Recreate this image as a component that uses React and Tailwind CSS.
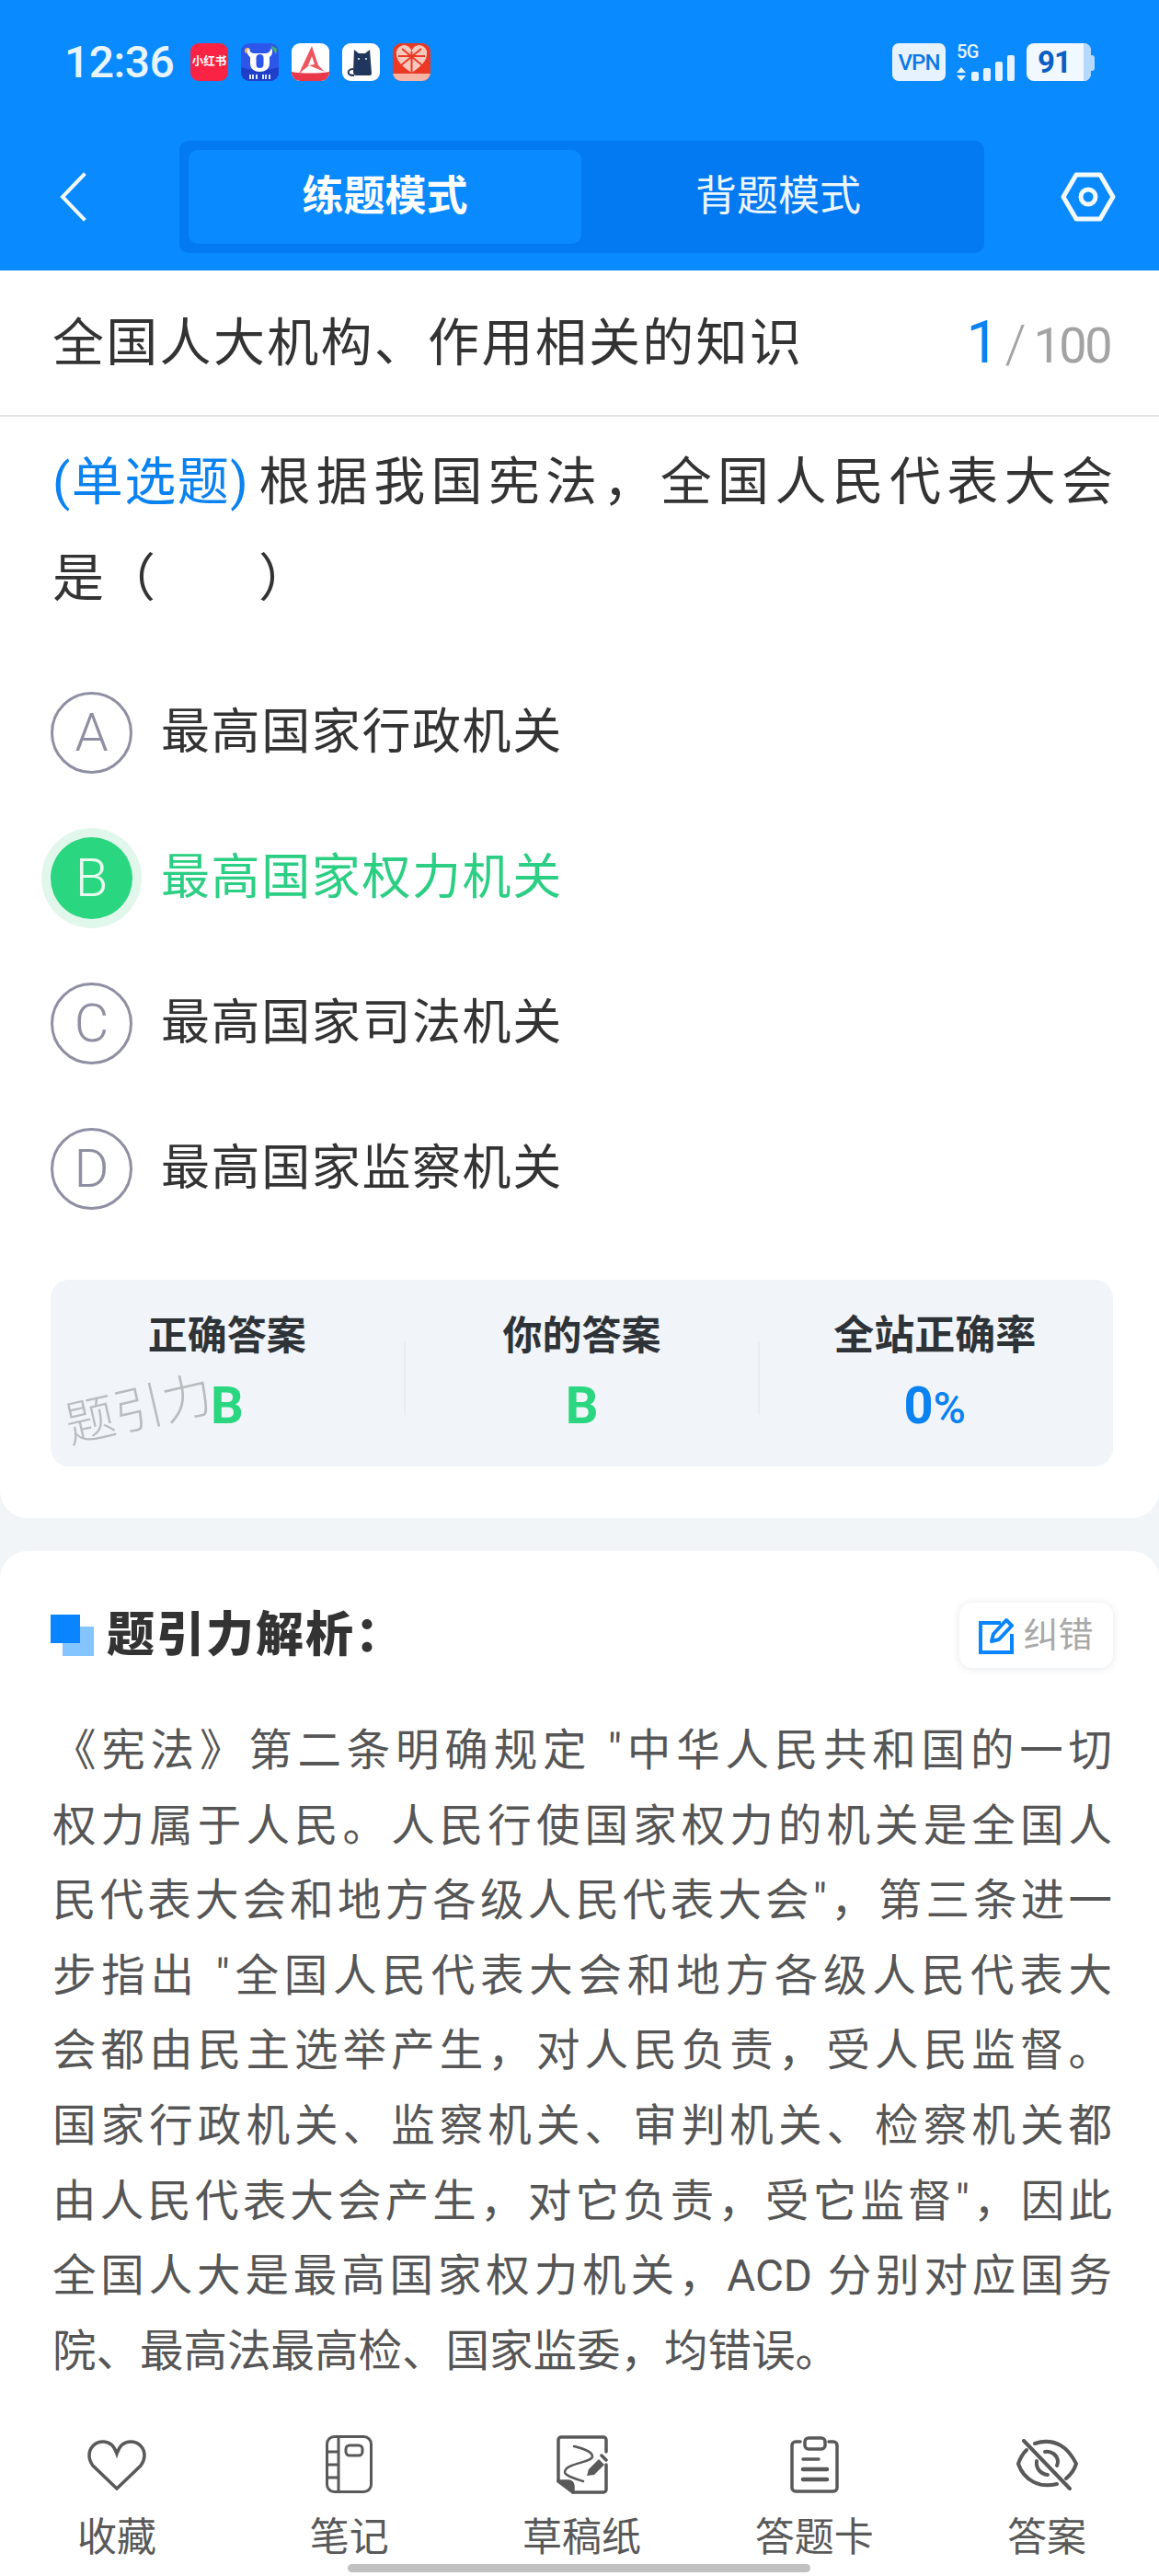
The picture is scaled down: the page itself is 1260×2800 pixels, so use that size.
const CJK = "font-['Roboto','Noto_Sans_CJK_SC',sans-serif]";

const options = [
  { key: "A", text: "最高国家行政机关" },
  { key: "B", text: "最高国家权力机关", correct: true },
  { key: "C", text: "最高国家司法机关" },
  { key: "D", text: "最高国家监察机关" },
];

const explanation = [
  "《宪法》第二条明确规定 \"中华人民共和国的一切",
  "权力属于人民。人民行使国家权力的机关是全国人",
  "民代表大会和地方各级人民代表大会\"，第三条进一",
  "步指出 \"全国人民代表大会和地方各级人民代表大",
  "会都由民主选举产生，对人民负责，受人民监督。",
  "国家行政机关、监察机关、审判机关、检察机关都",
  "由人民代表大会产生，对它负责，受它监督\"，因此",
  "全国人大是最高国家权力机关，ACD 分别对应国务",
];

function AppIcons() {
  return (
    <div className="flex gap-[14px] ml-[20px] mt-[-2px]">
      <div className={`w-[41px] h-[41px] rounded-[9px] bg-[#fb2343] flex items-center justify-center text-white text-[12.500px] font-bold leading-none whitespace-nowrap ${CJK}`}>小红书</div>
      <div className="w-[41px] h-[41px] rounded-[9px] bg-[#2f56ea] overflow-hidden">
        <svg width="41" height="41" viewBox="0 0 41 41">
          <circle cx="7" cy="8" r="3" fill="#e8b96a" />
          <path d="M32 2l7 4-1 6z" fill="#3fb56b" />
          <path d="M0 26c10 4 30 4 41 0v15H0z" fill="#1f3fc9" />
          <path d="M8 5c1 4 3 5 5 6h15c2-1 4-2 5-6 2 4 1 8-2 10v7c0 6-5 9-10.500 9S10 28 10 22v-7C7 13 6 9 8 5z" fill="#fff" />
          <rect x="16.500" y="12" width="8" height="15" rx="4" fill="#2f56ea" />
          <path d="M10 34v5M13 34v5M24 34v5M27 34v5M17 34v5M31 34v5" stroke="#d8e4ff" strokeWidth="2" />
        </svg>
      </div>
      <div className="w-[41px] h-[41px] rounded-[9px] bg-white overflow-hidden">
        <svg width="41" height="41" viewBox="0 0 41 41">
          <path d="M22 3l7 21 7 7-10-4-7-3-11 9C12 24 17 14 22 3z" fill="#f0545f" />
          <path d="M22 14l3 9-7 1z" fill="#fff" />
          <path d="M0 31c10 2 30 2 41 0v10H0z" fill="#e8384a" />
        </svg>
      </div>
      <div className="w-[41px] h-[41px] rounded-[9px] bg-white">
        <svg width="41" height="41" viewBox="0 0 41 41">
          <path d="M13 7l5 4h7l5-4 2 26c0 1-1 2-2 2H15c-2 0-3-2-3-4z" fill="#20365c" />
          <path d="M12 28c-4 0-6 2-5 5 1 2 3 2 6 2" stroke="#20365c" strokeWidth="2" fill="none" />
          <circle cx="18" cy="17" r="1" fill="#fff" />
          <circle cx="26" cy="17" r="1" fill="#fff" />
        </svg>
      </div>
      <div className="w-[41px] h-[41px] rounded-[9px] bg-[#ea3a26] overflow-hidden">
        <svg width="41" height="41" viewBox="0 0 41 41">
          <path d="M20.500 32C10 25 4 19 4 12a8 8 0 0 1 16.500-3A8 8 0 0 1 37 12c0 7-6 13-16.500 20z" fill="#f9c9bd" />
          <path d="M20.500 9v23M6 14h29M10 6l22 18M31 6L9 24" stroke="#ea3a26" strokeWidth="2" />
          <path d="M0 33h41v8H0z" fill="#f7b3a3" />
        </svg>
      </div>
    </div>
  );
}

function StatusRight() {
  return (
    <div className="flex items-start">
      <div className="w-[58px] h-[41px] rounded-[7px] bg-[#e6f3ff] text-[#0a78e6] text-[24px] font-['Roboto',sans-serif] font-medium flex items-center justify-center tracking-[-1px]">VPN</div>
      <div className="ml-[12px] w-[63px] h-[41px] relative">
        <span className="absolute left-0 top-[-3px] text-[#e6f3ff] text-[20px] font-medium font-['Roboto',sans-serif] leading-[24px] tracking-[-0.5px]">5G</span>
        <svg className="absolute left-0 top-0" width="63" height="41" viewBox="0 0 63 41" fill="#e6f3ff">
          <path d="M5 26l5 6H0zM5 41l5-6H0z" />
          <rect x="16" y="31" width="8" height="10" rx="2" />
          <rect x="29" y="27" width="8" height="14" rx="2" />
          <rect x="42" y="20" width="8" height="21" rx="2" />
          <rect x="55" y="13" width="8" height="28" rx="2" />
        </svg>
      </div>
      <div className="relative ml-[13px] w-[70px] h-[41px] rounded-[8px] bg-[#f2f8ff] overflow-hidden text-[#0a5fc4] text-[33px] font-bold font-['Roboto',sans-serif] flex items-center justify-center pr-[10px] tracking-[-1px]">
        91
        <div className="absolute right-0 top-0 bottom-0 w-[8px] bg-[#b5d8fd]" />
      </div>
      <div className="w-[4px] h-[17px] mt-[13px] bg-[#b5d8fd] rounded-r-[3px]" />
    </div>
  );
}

function TopBar() {
  return (
    <header className="bg-[#0a8aff] h-[294px] flex flex-col shrink-0">
      <div className="h-[153px] pt-[49px] px-[70px] flex items-start">
        <span className="text-[#e8f5ff] text-[48px] font-['Roboto',sans-serif] font-medium leading-[38px] tracking-[-0.5px] w-[117px] whitespace-nowrap">12:36</span>
        <AppIcons />
        <div className="ml-auto -mt-[2px]">
          <StatusRight />
        </div>
      </div>
      <div className="flex items-start pl-[64px] pr-[47px]">
        <div className="w-[131px] h-[122px] flex items-center">
          <svg width="30" height="54" viewBox="0 0 30 54" fill="none" stroke="#f2f9ff" strokeWidth="4" strokeLinecap="square">
            <path d="M27 3L4 27l23 24" />
          </svg>
        </div>
        <div className="w-[875px] h-[122px] rounded-[10px] bg-[#0379f2] py-[10px] px-[10px] flex">
          <div className={`w-[427px] h-[102px] rounded-[10px] bg-[#0a8aff] text-white text-[45px] font-bold flex items-center justify-center ${CJK}`}>练题模式</div>
          <div className={`flex-1 text-[#ecf6ff] text-[45px] flex items-center justify-center ${CJK}`}>背题模式</div>
        </div>
        <div className="flex-1 h-[122px] flex items-center justify-end">
          <svg width="60" height="54" viewBox="0 0 60 54" fill="none" stroke="#f2f9ff" strokeWidth="5" strokeLinejoin="round">
            <path d="M17 3h26l14 24-14 24H17L3 27z" />
            <circle cx="30" cy="27" r="8" />
          </svg>
        </div>
      </div>
    </header>
  );
}

function QuestionCard() {
  return (
    <section className="bg-white rounded-b-[30px] h-[1356px] shrink-0">
      <div className="h-[159px] pl-[57px] pr-[53px] flex items-center justify-between border-b-2 border-[#e2e4e6]">
        <span className={`text-[56px] tracking-[2.300px] text-[#333] ${CJK}`}>全国人大机构、作用相关的知识</span>
        <span className="text-[#a3a3a3] font-['Roboto',sans-serif] flex items-baseline">
          <span className="text-[#0a82f0] text-[64px] mr-[6px]">1</span>
          <span className="text-[58px] font-light mr-[8px]">/</span>
          <span className="text-[54px] tracking-[-2.500px]">100</span>
        </span>
      </div>
      <div className={`pl-[57px] pr-[50px] pt-[19px] text-[56px] text-[#333] leading-[105px] ${CJK}`}>
        <div className="[text-align:justify] [text-align-last:justify]">
          <span className="inline-block text-[#0a82f0] tracking-[1.500px] mr-[4px]">(单选题)</span>根据我国宪法，全国人民代表大会
        </div>
        <div>是（　　）</div>
      </div>
      <div className="mt-[70px] pl-[55px] flex flex-col gap-[69px]">
        {options.map((o) => (
          <div key={o.key} className="flex items-center h-[89px]">
            {o.correct ? (
              <div className="w-[89px] h-[89px] rounded-full bg-[#2ad67f] text-[#e8fbef] text-[58px] font-['Roboto',sans-serif] font-light flex items-center justify-center shadow-[0_0_0_10px_#e2f7ec]">B</div>
            ) : (
              <div className="w-[89px] h-[89px] rounded-full border-[3px] border-[#8f8fa3] text-[#8f8fa3] text-[58px] font-['Roboto',sans-serif] font-light flex items-center justify-center">{o.key}</div>
            )}
            <span className={`ml-[31px] text-[53px] tracking-[1.600px] ${o.correct ? "text-[#2cce83]" : "text-[#333]"} ${CJK}`}>{o.text}</span>
          </div>
        ))}
      </div>
      <div className={`relative ml-[55px] mr-[50px] mt-[76px] h-[203px] rounded-[20px] bg-[#f1f5f9] flex pt-[31px] text-center ${CJK}`}>
        <div className="flex-1 flex flex-col items-center">
          <span className="text-[43px] font-bold text-[#2e3338] leading-[60px]">正确答案</span>
          <span className="relative text-[56px] font-bold text-[#2ad67f] leading-[70px] mt-[11px]">B</span>
        </div>
        <div className="w-[2px] h-[80px] mt-[36px] bg-[#e9edf1]" />
        <div className="flex-1 flex flex-col items-center">
          <span className="text-[43px] font-bold text-[#2e3338] leading-[60px]">你的答案</span>
          <span className="text-[56px] font-bold text-[#2ad67f] leading-[70px] mt-[11px]">B</span>
        </div>
        <div className="w-[2px] h-[80px] mt-[36px] bg-[#e9edf1]" />
        <div className="flex-1 flex flex-col items-center -translate-x-[2px]">
          <span className="text-[44px] font-bold text-[#2e3338] leading-[60px]">全站正确率</span>
          <span className="text-[56px] font-bold text-[#0a82f0] leading-[70px] mt-[11px]">0<span className="text-[48px] font-medium">%</span></span>
        </div>
        <span className="absolute left-[15px] top-[112px] text-[#b9bcbf] text-[54px] font-extralight -rotate-[13deg] leading-[60px] whitespace-nowrap">题引力</span>
      </div>
    </section>
  );
}

function Explanation() {
  return (
    <section className="bg-white rounded-t-[30px] mt-[36px] flex-1 pl-[57px] pr-[51px] pt-[56px]">
      <div className="flex items-center h-[71px] -mr-[1px]">
        <svg width="47" height="45" viewBox="0 0 47 45" className="shrink-0 -translate-x-[2px]">
          <rect x="13" y="13" width="34" height="32" fill="#85c5ff" />
          <rect x="0" y="0" width="32" height="31" fill="#0a84ff" />
        </svg>
        <span className={`ml-[12px] text-[52px] font-black tracking-[2px] text-[#333] ${CJK}`}>题引力解析：</span>
        <div className="ml-auto w-[167px] h-[71px] rounded-[14px] bg-white shadow-[0_1px_8px_rgba(40,60,90,0.12)] flex items-center justify-center">
          <svg width="40" height="40" viewBox="0 0 40 40" fill="none" stroke="#0a84ff" strokeWidth="4">
            <path d="M24 6H2v32h34V18" />
            <path d="M14 26l2-8L30 3l6 6-14 15z" strokeLinejoin="round" />
          </svg>
          <span className={`ml-[8px] text-[38px] text-[#a8a8a8] ${CJK}`}>纠错</span>
        </div>
      </div>
      <div className={`mt-[50px] text-[47.500px] leading-[81.600px] text-[#565656] ${CJK}`}>
        {explanation.map((line, i) => (
          <div key={i} className="[text-align:justify] [text-align-last:justify] whitespace-nowrap">{line}</div>
        ))}
        <div>院、最高法最高检、国家监委，均错误。</div>
      </div>
    </section>
  );
}

const tabs = [
  {
    label: "收藏",
    icon: (
      <svg width="64" height="56" viewBox="0 0 64 56" fill="none" stroke="#595959" strokeWidth="3.500" strokeLinejoin="miter">
        <path d="M32 16C29 7 23 3 17 3 8 3 2 10 2 18c0 4 1 7 4 11l26 25 26-25c3-4 4-7 4-11 0-8-6-15-15-15-6 0-12 4-15 13z" />
      </svg>
    ),
  },
  {
    label: "笔记",
    icon: (
      <svg width="51" height="63" viewBox="0 0 51 63" fill="none" stroke="#595959" strokeWidth="3">
        <rect x="1.500" y="1.500" width="48" height="60" rx="8" />
        <path d="M14 2v59M2 18h12M2 32h12M2 46h12" />
        <rect x="22" y="11" width="18" height="11" rx="4" />
      </svg>
    ),
  },
  {
    label: "草稿纸",
    icon: (
      <svg width="56" height="64" viewBox="0 0 56 64" fill="none" stroke="#595959" strokeWidth="3.500" strokeLinejoin="round" strokeLinecap="round">
        <path d="M18 62h33a3 3 0 0 0 3-3V32M54 18V5a3 3 0 0 0-3-3H5a3 3 0 0 0-3 3v45" />
        <path d="M2 50l16 12V55a5 5 0 0 0-5-5z" fill="#595959" />
        <path d="M19 12c9 2 20 6 20 11 0 7-29 7-30 17 0 4 11 7 20 10" strokeWidth="2.500" />
        <path d="M33 44l2-7 11-11 6 6-11 11z" fill="#595959" stroke="none" />
        <path d="M49 22l5 5" />
      </svg>
    ),
  },
  {
    label: "答题卡",
    icon: (
      <svg width="53" height="62" viewBox="0 0 53 62" fill="none" stroke="#595959" strokeWidth="3.500" strokeLinecap="round">
        <path d="M11 6H6a4 4 0 0 0-4 4v46a4 4 0 0 0 4 4h41a4 4 0 0 0 4-4V10a4 4 0 0 0-4-4h-5" />
        <rect x="16" y="2" width="22" height="12" rx="4" />
        <path d="M14 25h17" />
        <path d="M14 36h26M14 47h26" strokeWidth="4.500" />
      </svg>
    ),
  },
  {
    label: "答案",
    icon: (
      <svg width="67" height="56" viewBox="0 0 67 56" fill="none" stroke="#595959" strokeWidth="4" strokeLinecap="round">
        <path d="M8 2l50 52" />
        <path d="M20 5c9-3 19-3 28 2 7 4 13 12 17 20-2 6-6 12-11 16" />
        <path d="M11 12c-4 4-7 9-9 15 3 9 9 16 17 20 8 4 17 4 25 2" />
        <path d="M31 14c7-1 13 3 14 10 0 2 0 3-1 5" />
        <path d="M22 24c-1 8 4 14 12 15" />
      </svg>
    ),
  },
];

function BottomBar() {
  return (
    <nav className={`relative bg-white h-[182px] shrink-0 flex justify-between pl-[64px] pr-[59px] pt-[29px] ${CJK}`}>
      {tabs.map((t) => (
        <div key={t.label} className="w-[126px] flex flex-col items-center">
          <div className="h-[63px] flex items-center justify-center">{t.icon}</div>
          <span className="mt-[18px] text-[43px] leading-[60px] text-[#595959] whitespace-nowrap">{t.label}</span>
        </div>
      ))}
      <div className="absolute left-[378px] bottom-[4px] w-[503px] h-[9px] rounded-full bg-[#c1c1c1]" />
    </nav>
  );
}

export default function App() {
  return (
    <div className="w-[1260px] h-[2800px] bg-[#f2f5f8] flex flex-col overflow-hidden">
      <TopBar />
      <QuestionCard />
      <Explanation />
      <BottomBar />
    </div>
  );
}
